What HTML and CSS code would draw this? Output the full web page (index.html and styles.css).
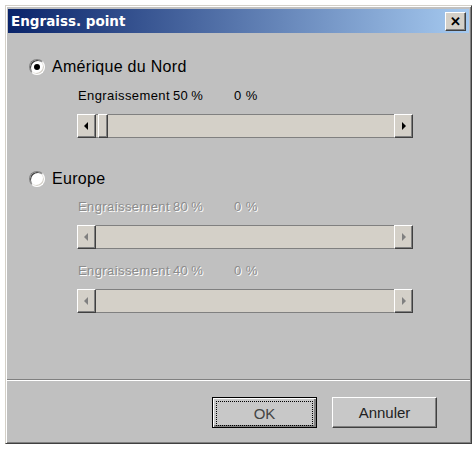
FILE: index.html
```html
<!DOCTYPE html>
<html lang="fr">
<head>
    <meta charset="UTF-8">
    <title>Engraiss. point</title>
    <link rel="stylesheet" href="styles.css">
</head>
<body>
<div class="window">
    <div class="titlebar">
        <span class="title">Engraiss. point</span>
        <span class="close">&#x2715;</span>
    </div>

    <div class="content">
        <div class="radio-row">
            <span class="radio checked"></span>
            <span class="radio-label">Amérique du Nord</span>
        </div>
        <div class="slider-block">
            <div class="slider-label"><span class="name">Engraissement 50 %</span><span class="value">0 %</span></div>
            <div class="scrollbar">
                <span class="arrow left"></span>
                <span class="thumb"></span>
                <span class="track"></span>
                <span class="arrow right"></span>
            </div>
        </div>

        <div class="radio-row second">
            <span class="radio"></span>
            <span class="radio-label">Europe</span>
        </div>
        <div class="slider-block disabled first">
            <div class="slider-label"><span class="name">Engraissement 80 %</span><span class="value">0 %</span></div>
            <div class="scrollbar">
                <span class="arrow left"></span>
                <span class="track"></span>
                <span class="arrow right"></span>
            </div>
        </div>
        <div class="slider-block disabled last">
            <div class="slider-label"><span class="name">Engraissement 40 %</span><span class="value">0 %</span></div>
            <div class="scrollbar">
                <span class="arrow left"></span>
                <span class="track"></span>
                <span class="arrow right"></span>
            </div>
        </div>
    </div>

    <div class="separator"></div>
    <div class="footer">
        <button class="btn default"><span class="focus">OK</span></button>
        <button class="btn">Annuler</button>
    </div>
</div>
</body>
</html>
```
FILE: styles.css
```css
body {
    margin: 0;
    background: #ffffff;
    font-family: "Liberation Sans", Arial, sans-serif;
}

.window {
    margin: 5px 0 0 5px;
    width: 467px;
    height: 439px;
    box-sizing: border-box;
    background: #c0c0c0;
    border: 1px solid;
    border-color: #d4d0c8 #404040 #404040 #d4d0c8;
    box-shadow: inset 1px 1px 0 #ffffff, inset -1px -1px 0 #808080;
    padding: 2px;
    display: flex;
    flex-direction: column;
}

/* barre de titre */
.titlebar {
    height: 24px;
    margin-top: 1px;
    background: linear-gradient(to right, #0a246a, #a6caf0);
    display: flex;
    align-items: center;
    justify-content: space-between;
    padding: 0 3px 0 3px;
}
.title {
    color: #ffffff;
    font-family: "DejaVu Sans", Tahoma, sans-serif;
    font-weight: bold;
    font-size: 13.5px;
}
.close {
    width: 21px;
    height: 19px;
    box-sizing: border-box;
    background: #d4d0c8;
    border: 1px solid;
    border-color: #ffffff #404040 #404040 #ffffff;
    box-shadow: inset -1px -1px 0 #808080;
    font-size: 13px;
    font-weight: bold;
    color: #000;
    display: flex;
    align-items: center;
    justify-content: center;
    line-height: 1;
}

.content {
    flex: 1;
    padding: 25px 0 0 20px;
}

.radio-row {
    display: flex;
    align-items: center;
    height: 18px;
}
.radio-row.second {
    margin-top: 32px;
}
.radio {
    width: 16px;
    height: 16px;
    box-sizing: border-box;
    border-radius: 50%;
    background: #ffffff;
    border: 1px solid;
    border-color: #808080 #ffffff #ffffff #808080;
    box-shadow: inset 1px 1px 0 #404040, inset -1px -1px 0 #d4d0c8;
    display: flex;
    align-items: center;
    justify-content: center;
    margin-left: 1px;
}
.radio.checked::after {
    content: "";
    width: 6px;
    height: 6px;
    border-radius: 50%;
    background: #000;
}
.radio-label {
    font-size: 16px;
    letter-spacing: 0.3px;
    color: #000;
    margin-left: 7px;
}

.slider-block {
    margin-left: 49px;
    width: 336px;
}
.slider-label {
    display: flex;
    font-size: 13px;
    letter-spacing: 0.4px;
    color: #000;
    height: 16px;
    align-items: center;
    margin-top: 11px;
    padding-left: 1px;
}
.slider-block.first .slider-label {
    margin-top: 10px;
}
.slider-block.last .slider-label {
    margin-top: 13px;
}
.slider-label .name {
    width: 156px;
    word-spacing: -1px;
}
.disabled .slider-label {
    color: #8c8c8c;
    text-shadow: 1px 1px 0 #ffffff;
}

.scrollbar {
    display: flex;
    height: 22px;
    margin-top: 11px;
    background: #d4d0c8;
    border-top: 1px solid #808080;
    border-bottom: 1px solid #808080;
}
.track {
    flex: 1;
}
.arrow, .thumb {
    box-sizing: border-box;
    background: #d4d0c8;
    border: 1px solid;
    border-color: #ffffff #404040 #404040 #ffffff;
    box-shadow: inset -1px -1px 0 #808080;
    position: relative;
}
.arrow {
    width: 19px;
    margin-top: -1px;
    height: 24px;
}
.thumb {
    width: 10px;
    margin-left: 2px;
    margin-top: -1px;
    height: 24px;
}
.arrow::after {
    content: "";
    position: absolute;
    top: 7px;
    border-top: 4px solid transparent;
    border-bottom: 4px solid transparent;
}
.arrow.left::after {
    left: 6px;
    border-right: 4px solid #000;
}
.arrow.right::after {
    left: 7px;
    border-left: 4px solid #000;
}
.disabled .arrow.left::after {
    border-right-color: #808080;
}
.disabled .arrow.right::after {
    border-left-color: #808080;
}

.separator {
    height: 0;
    border-top: 1px solid #808080;
    border-bottom: 1px solid #ffffff;
    margin: 0 -1px;
}

.footer {
    height: 60px;
    display: flex;
    justify-content: flex-end;
    align-items: flex-start;
    padding: 16px 32px 0 0;
    box-sizing: border-box;
    gap: 15px;
}
.btn {
    width: 105px;
    height: 31px;
    box-sizing: border-box;
    background: #c8c8c8;
    border: 1px solid;
    border-color: #ffffff #404040 #404040 #ffffff;
    box-shadow: inset -1px -1px 0 #808080;
    font-family: "Liberation Sans", Arial, sans-serif;
    font-size: 15px;
    color: #222;
    padding: 0;
}
.btn.default {
    border: 1px solid #000;
    box-shadow: inset 1px 1px 0 #ffffff, inset -2px -2px 0 #808080;
    padding: 3px;
}
.focus {
    display: flex;
    align-items: center;
    justify-content: center;
    height: 100%;
    border: 1px dotted #000;
    color: #444;
}
```
